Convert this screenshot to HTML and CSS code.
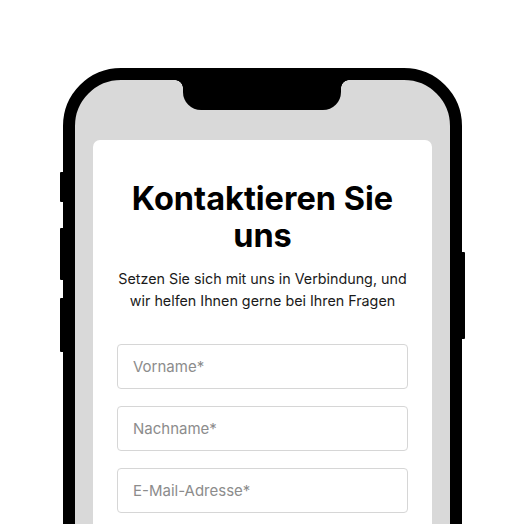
FILE: index.html
```html
<!DOCTYPE html>
<html lang="de">
<head>
<meta charset="utf-8">
<title>Kontakt</title>
<link rel="stylesheet" href="styles.css">
</head>
<body>
<div class="stage">
  <div class="phone">
    <span class="btn btn-l1"></span>
    <span class="btn btn-l2"></span>
    <span class="btn btn-l3"></span>
    <span class="btn btn-r1"></span>
    <div class="screen">
      <div class="notch"></div>
      <div class="card">
        <h1 class="title">Kontaktieren Sie uns</h1>
        <p class="lead">Setzen Sie sich mit uns in Verbindung, und wir helfen Ihnen gerne bei Ihren Fragen</p>
        <form class="form">
          <input class="field" type="text" placeholder="Vorname*">
          <input class="field" type="text" placeholder="Nachname*">
          <input class="field" type="email" placeholder="E-Mail-Adresse*">
        </form>
      </div>
    </div>
  </div>
</div>
</body>
</html>
```
FILE: styles.css
```css
html, body {
  margin: 0;
  padding: 0;
  background: #ffffff;
  overflow: hidden;
  height: 524px;
}
.stage {
  padding: 68px 0 0 63px;
}
.phone {
  position: relative;
  width: 375px;
  height: 640px;
  border: 12px solid #000;
  border-radius: 58px;
  background: #d9d9d9;
}
.btn {
  position: absolute;
  background: #000;
  width: 4px;
  border-radius: 1px;
}
.btn-l1 { left: -15px; top: 92px; height: 30px; }
.btn-l2 { left: -15px; top: 148px; height: 52px; }
.btn-l3 { left: -15px; top: 218px; height: 54px; }
.btn-r1 { right: -15px; top: 172px; height: 87px; }
.screen {
  position: relative;
  height: 100%;
  border-radius: 46px;
  overflow: hidden;
  padding-top: 60px;
  box-sizing: border-box;
}
.notch {
  position: absolute;
  top: 0;
  left: 108px;
  width: 158px;
  height: 30px;
  background: #000;
  border-radius: 0 0 18px 18px;
}
.notch::before,
.notch::after {
  content: "";
  position: absolute;
  top: 0;
  width: 8px;
  height: 8px;
}
.notch::before {
  left: -8px;
  background: radial-gradient(circle at 0 100%, transparent 7.5px, #000 8px);
}
.notch::after {
  right: -8px;
  background: radial-gradient(circle at 100% 100%, transparent 7.5px, #000 8px);
}
.card {
  margin: 0 18px;
  background: #fff;
  border-radius: 7px;
  padding: 40px 24px 40px;
  height: 500px;
  font-family: Inter, "Noto Sans", sans-serif;
  text-align: center;
}
.title {
  margin: 0;
  font-size: 32.5px;
  line-height: 37px;
  font-weight: 700;
  color: #000;
}
.lead {
  margin: 14px -6px 0;
  font-size: 14.3px;
  line-height: 22px;
  color: #1a1a1a;
}
.form {
  margin-top: 32px;
  display: flex;
  flex-direction: column;
  gap: 17px;
}
.field {
  display: block;
  box-sizing: border-box;
  width: 100%;
  height: 45px;
  margin: 0;
  padding: 0 15px;
  border: 1px solid #d6d6d6;
  border-radius: 4px;
  background: #fff;
  font-family: Inter, "Noto Sans", sans-serif;
  font-size: 15px;
  color: #222;
  outline: none;
}
.field::placeholder {
  color: #8c8c8c;
  opacity: 1;
}
```
